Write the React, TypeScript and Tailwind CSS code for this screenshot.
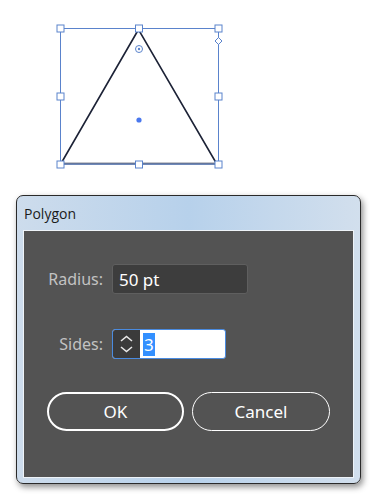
import React from 'react';

const Handle = ({ x, y }: { x: number; y: number }) => (
  <rect x={x - 3.5} y={y - 3.5} width={7} height={7} fill="#fff" stroke="#5a83cc" strokeWidth={1} />
);

const Canvas = () => (
  <svg width={373} height={195} viewBox="0 0 373 195" className="block">
    <rect x={60.5} y={28.5} width={158} height={136} fill="none" stroke="#5a83cc" strokeWidth={1} />
    <polygon points="138.5,29.5 61,163.5 216.5,163.5" fill="none" stroke="#1c2236" strokeWidth={1.6} strokeLinejoin="miter" />
    <line x1={61} y1={164} x2={217} y2={164} stroke="#7b93bf" strokeWidth={1.5} />
    <Handle x={60.5} y={28.5} />
    <Handle x={139} y={28.5} />
    <Handle x={218.5} y={28.5} />
    <Handle x={60.5} y={96.5} />
    <Handle x={218.5} y={96.5} />
    <Handle x={60.5} y={164.5} />
    <Handle x={139} y={164.5} />
    <Handle x={218.5} y={164.5} />
    <polygon points="218.5,37.5 222,41 218.5,44.5 215,41" fill="#fff" stroke="#5a83cc" strokeWidth={1} />
    <circle cx={139} cy={49} r={3.5} fill="none" stroke="#5a83cc" strokeWidth={1} />
    <circle cx={139} cy={49} r={1.2} fill="#5a83cc" />
    <circle cx={139} cy={120} r={2.6} fill="#4a78ee" />
  </svg>
);

export default function App() {
  return (
    <div className="w-[373px] h-[494px] bg-white overflow-hidden" style={{ fontFamily: '"Noto Sans", "Open Sans", sans-serif' }}>
      <Canvas />

      {/* Polygon dialog */}
      <div className="ml-[16px] w-[345px] h-[289px] rounded-[7px] border border-[#2a2a2a] shadow-[2px_3px_6px_rgba(0,0,0,0.45)] bg-gradient-to-r from-[#cddcec] via-[#b7d1eb] to-[#d2dfed] flex flex-col px-[6px] pb-[5px]">
        <div className="h-[34px] flex items-center pl-[1px] text-[14px] text-[#1b1b1b]" style={{ fontFamily: '"Open Sans", sans-serif' }}>
          Polygon
        </div>
        <div className="flex-1 bg-[#535353] border border-[#eef3f8] flex flex-col">
          <div className="flex items-center mt-[33px]">
            <span className="w-[79px] text-right text-[16px] text-[#c2c2c2] leading-none">Radius:</span>
            <div className="ml-[9px] w-[136px] h-[30px] rounded-[3px] bg-[#3d3d3d] border border-[#5f5f5f] flex items-center pl-[6px] text-[17px] text-white leading-none">
              50 pt
            </div>
          </div>

          <div className="flex items-center mt-[35px]">
            <span className="w-[79px] text-right text-[16px] text-[#c2c2c2] leading-none">Sides:</span>
            <div className="ml-[9px] w-[114px] h-[30px] rounded-[3px] border-[1.5px] border-[#4a8be0] bg-white flex overflow-hidden">
              <div className="w-[27px] bg-[#3b3b3b] flex flex-col items-center justify-center gap-[4px]">
                <svg width="13" height="7" viewBox="0 0 13 7"><path d="M1 6 L6.5 1.5 L12 6" fill="none" stroke="#e8e8e8" strokeWidth="1.6" /></svg>
                <svg width="13" height="7" viewBox="0 0 13 7"><path d="M1 1 L6.5 5.5 L12 1" fill="none" stroke="#e8e8e8" strokeWidth="1.6" /></svg>
              </div>
              <div className="flex items-center pl-[3px]">
                <span className="bg-[#3390ff] text-white text-[17px] leading-[23px] px-[1px]">3</span>
              </div>
            </div>
          </div>

          <div className="flex mt-[33px] ml-[23px] gap-[8px]">
            <button className="w-[137px] h-[39px] rounded-full border-[2.5px] border-white text-white text-[17px]">OK</button>
            <button className="w-[138px] h-[39px] rounded-full border-[1.5px] border-white text-white text-[17px]">Cancel</button>
          </div>
        </div>
      </div>
    </div>
  );
}
